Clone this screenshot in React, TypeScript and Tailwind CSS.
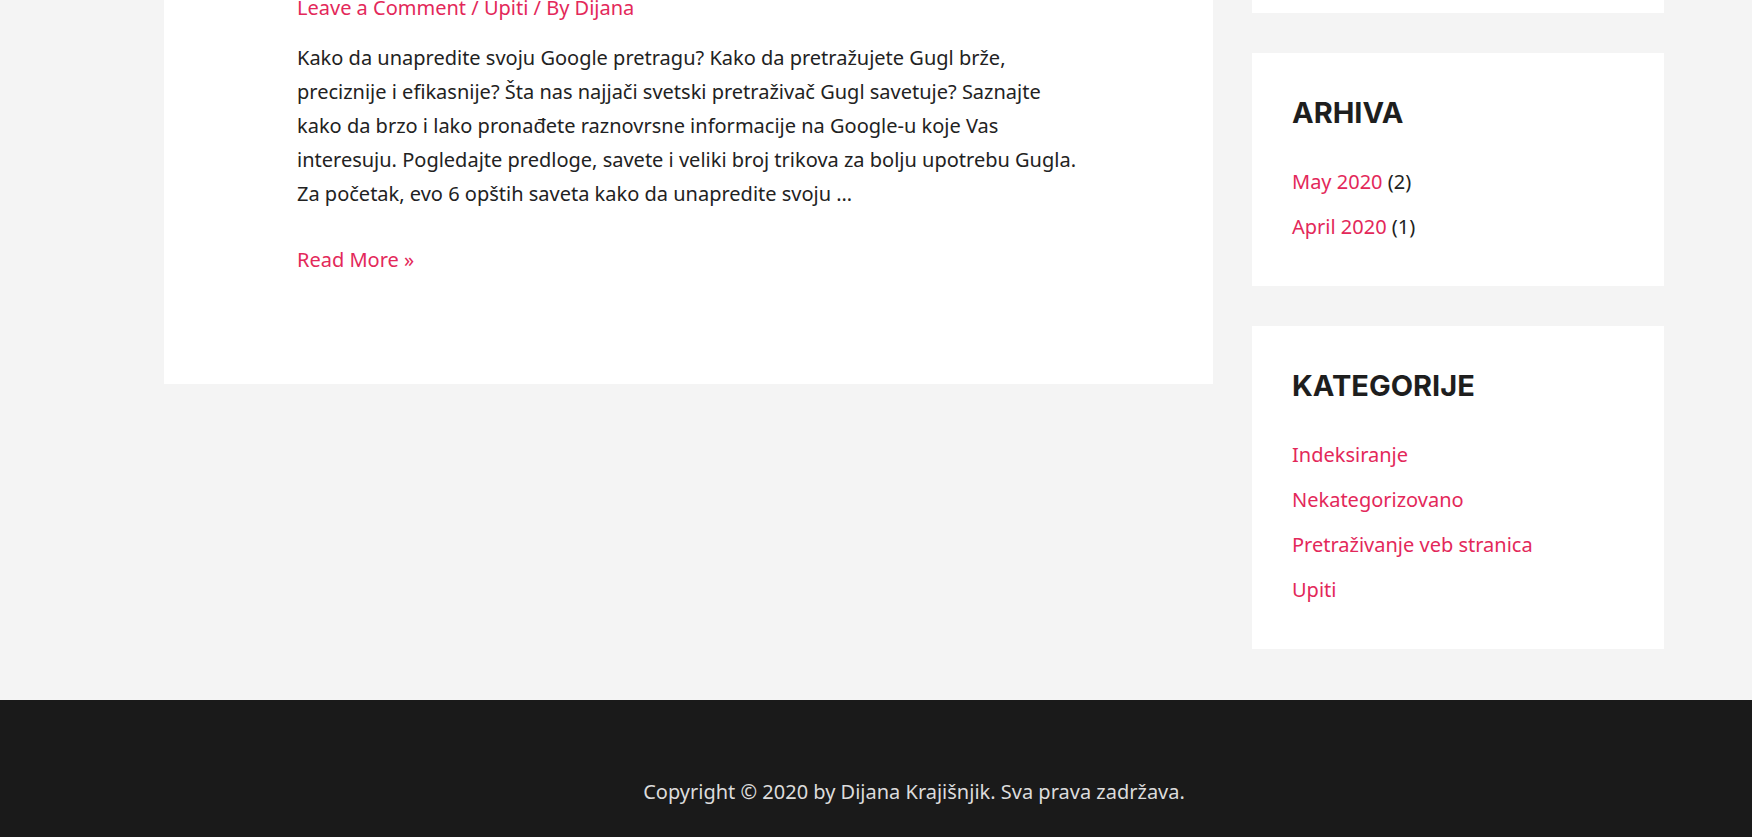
import React from "react";

const pink = "text-[#e3285a]";

const archive = [
  { label: "May 2020", count: 2 },
  { label: "April 2020", count: 1 },
];

const categories = [
  "Indeksiranje",
  "Nekategorizovano",
  "Pretraživanje veb stranica",
  "Upiti",
];

const Widget = ({ title, children }: { title: string; children: React.ReactNode }) => (
  <section className="mt-10 bg-white px-10 pt-10 pb-[37px]">
    <h2 className="mb-[26px] font-['Inter',sans-serif] text-[29px] font-bold leading-[40px] text-[#1e1e1e]">
      {title}
    </h2>
    <ul>{children}</ul>
  </section>
);

const App = () => {
  return (
    <div className="min-h-screen overflow-hidden bg-[#f4f4f4] font-['Noto_Sans',sans-serif] text-[20px] text-[#222]">
      <div className="ml-[164px] flex w-[1500px] items-start gap-[39px]">
        <article className="-mt-[9px] w-[1049px] bg-white px-[133px] pb-[107px]">
          <div className={`mb-[16px] leading-[34px] ${pink}`}>
            <a href="#">Leave a Comment</a> / <a href="#">Upiti</a> / By{" "}
            <a href="#">Dijana</a>
          </div>
          <p className="leading-[34px]">
            Kako da unapredite svoju Google pretragu? Kako da pretražujete Gugl brže,
            preciznije i efikasnije? Šta nas najjači svetski pretraživač Gugl savetuje?
            Saznajte kako da brzo i lako pronađete raznovrsne informacije na Google-u
            koje Vas interesuju. Pogledajte predloge, savete i veliki broj trikova za
            bolju upotrebu Gugla. Za početak, evo 6 opštih saveta kako da unapredite
            svoju …
          </p>
          <a href="#" className={`mt-8 block leading-[34px] ${pink}`}>
            Read More »
          </a>
        </article>

        <aside className="w-[412px]">
          <div className="h-[13px] bg-white" />
          <Widget title="ARHIVA">
            {archive.map((a) => (
              <li key={a.label} className="leading-[45px]">
                <a href="#" className={pink}>
                  {a.label}
                </a>{" "}
                ({a.count})
              </li>
            ))}
          </Widget>
          <Widget title="KATEGORIJE">
            {categories.map((c) => (
              <li key={c} className="leading-[45px]">
                <a href="#" className={pink}>
                  {c}
                </a>
              </li>
            ))}
          </Widget>
        </aside>
      </div>

      <footer className="mt-[51px] bg-[#1a1a1a] pt-[75px] pb-[75px]">
        <div className="ml-[164px] w-[1500px] text-center leading-[34px] text-[#dcdcdc]">
          Copyright © 2020 by Dijana Krajišnjik. Sva prava zadržava.
        </div>
      </footer>
    </div>
  );
};

export default App;
